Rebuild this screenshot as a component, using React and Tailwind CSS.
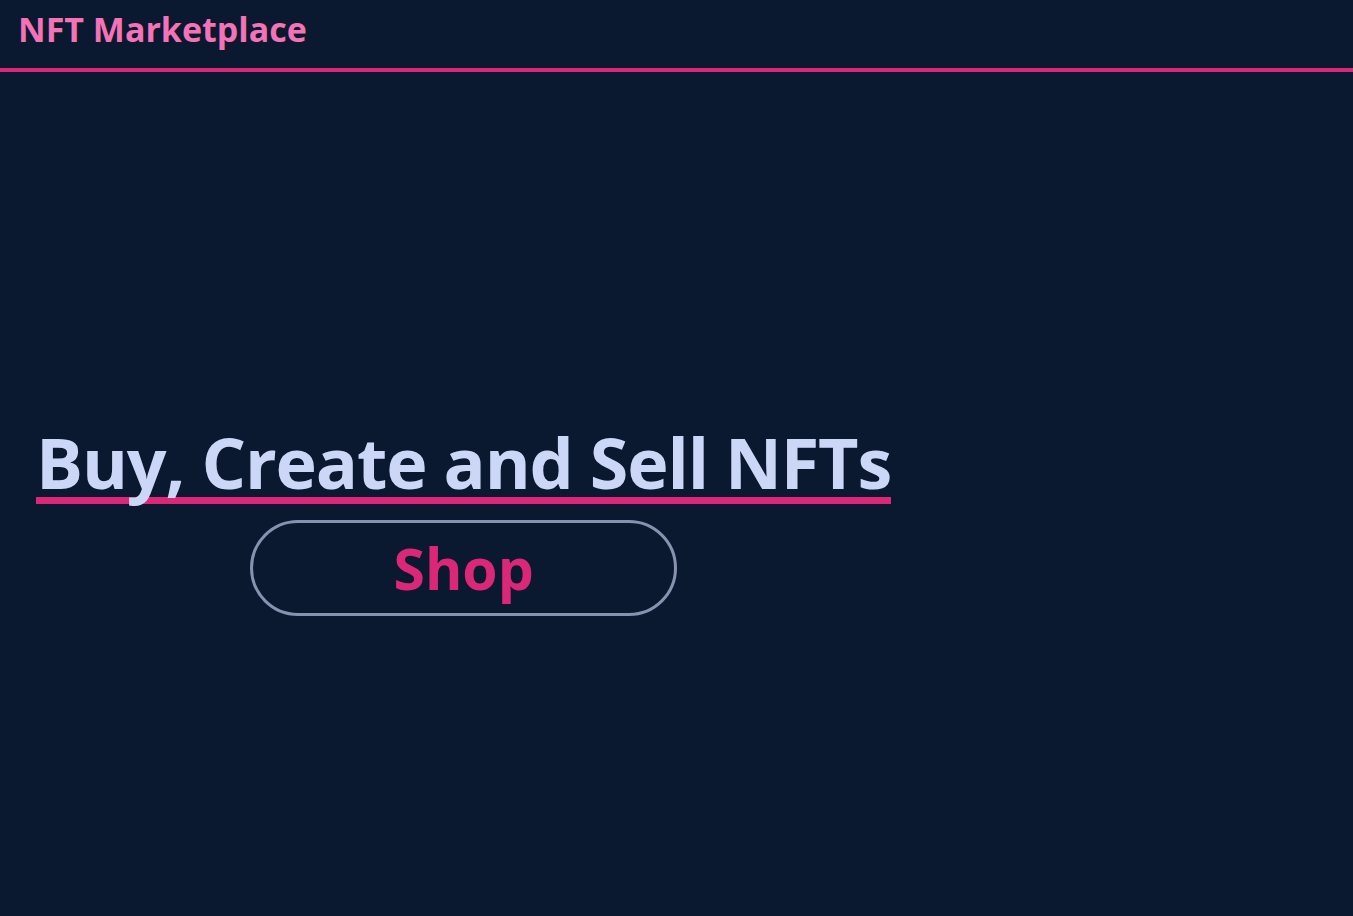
export default function App() {
  return (
    <div className="min-h-screen bg-[#0a192f] font-['Open_Sans','Noto_Sans',sans-serif]">
      <header className="h-[72px] border-b-[4px] border-[#db2777] px-[18px] flex items-center">
        <h1 className="text-[34px] font-bold text-[#f472b6] leading-none -mt-[10px]">NFT Marketplace</h1>
      </header>

      <main className="pl-[36px] pt-[355px]">
        <div className="inline-flex flex-col items-center">
          <h2 className="text-[70px] font-bold tracking-[-1.12px] text-[#ccd6f6] leading-[70px] border-b-[7px] border-[#db2777]">
            Buy, Create and Sell NFTs
          </h2>
          <button className="mt-[16px] w-[427px] h-[96px] rounded-full border-[3px] border-[#8892b0] text-[#db2777] text-[57px] font-bold leading-none">
            Shop
          </button>
        </div>
      </main>
    </div>
  );
}
